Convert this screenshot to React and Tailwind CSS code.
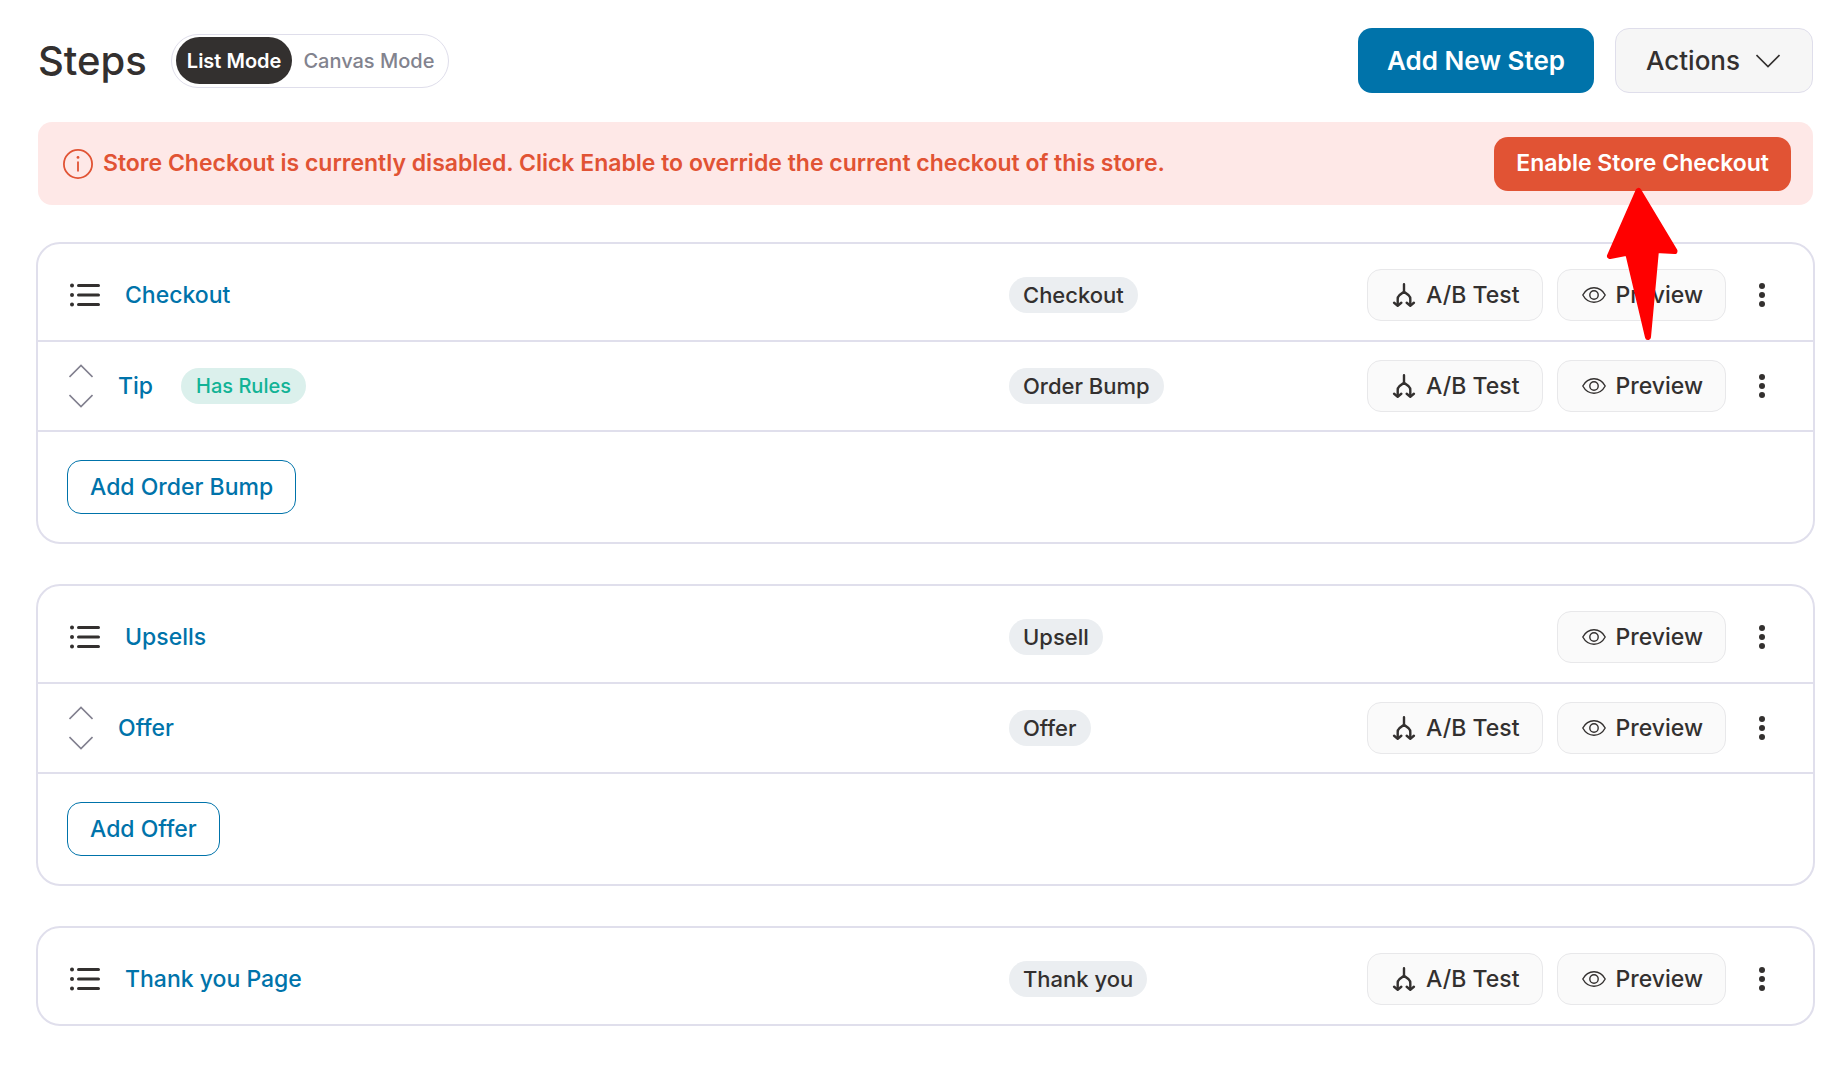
import { useState } from "react";
import clsx from "clsx";

const groups = [
  {
    id: "checkout",
    steps: [
      { name: "Checkout", type: "Checkout", abTest: true },
      { name: "Tip", type: "Order Bump", abTest: true, child: true, hasRules: true },
    ],
    addLabel: "Add Order Bump",
  },
  {
    id: "upsells",
    steps: [
      { name: "Upsells", type: "Upsell", abTest: false },
      { name: "Offer", type: "Offer", abTest: true, child: true },
    ],
    addLabel: "Add Offer",
  },
  {
    id: "thank-you",
    steps: [{ name: "Thank you Page", type: "Thank you", abTest: true }],
  },
];

function InfoIcon() {
  return (
    <svg className="size-[30px] shrink-0" viewBox="0 0 30 30" fill="none" stroke="currentColor">
      <circle cx="15" cy="15" r="14.1" strokeWidth="1.8" />
      <path d="M15 12.6V22.4" strokeWidth="1.8" />
      <circle cx="15" cy="8.4" r="1.4" fill="currentColor" stroke="none" />
    </svg>
  );
}

function ListIcon() {
  return (
    <svg className="h-6 w-[30px]" viewBox="0 0 30 24" fill="none" stroke="currentColor" strokeLinecap="round">
      <path d="M8.5 2.5H28.5M8.5 12H28.5M8.5 21.5H28.5" strokeWidth="3" />
      <path d="M2 2.5h.01M2 12h.01M2 21.5h.01" strokeWidth="4" />
    </svg>
  );
}

function Chevron({ up, className }) {
  return (
    <svg className={clsx("h-[14px] w-6", className)} viewBox="0 0 24 14" fill="none" stroke="currentColor" strokeWidth="1.6">
      <path d={up ? "M0.5 13L12 1.5L23.5 13" : "M0.5 1L12 12.5L23.5 1"} />
    </svg>
  );
}

function SplitIcon() {
  return (
    <svg className="size-6" viewBox="-0.5 0.5 24 24" fill="none" stroke="currentColor" strokeWidth="2.4" strokeLinecap="round" strokeLinejoin="round">
      <path d="M11.5 1.8V9.2M11.5 9.2L6.8 12.8Q5.2 14.2 5.2 16.4V22.4M11.5 9.2L16.2 12.8Q17.8 14.2 17.8 16.4V22.4" />
      <path d="M1.6 20.3L5.2 23.2L8.8 20.3M14.2 20.3L17.8 23.2L21.4 20.3" />
    </svg>
  );
}

function EyeIcon() {
  return (
    <svg className="h-4 w-6" viewBox="0 0 24 16" fill="none" stroke="currentColor" strokeWidth="1.4" strokeLinejoin="round">
      <path d="M0.8 8C3.4 3.2 7.4 0.8 12 0.8S20.6 3.2 23.2 8C20.6 12.8 16.6 15.2 12 15.2S3.4 12.8 0.8 8Z" />
      <circle cx="12" cy="8" r="4.2" />
    </svg>
  );
}

function DotsIcon() {
  return (
    <svg className="h-6 w-6" viewBox="0 0 24 24" fill="currentColor">
      <circle cx="12" cy="3" r="3" />
      <circle cx="12" cy="12" r="3" />
      <circle cx="12" cy="21" r="3" />
    </svg>
  );
}

function RowButton({ icon, children }) {
  return (
    <button
      type="button"
      className="flex h-[52px] items-center gap-[10px] rounded-[14px] border border-[#e8e8ea] bg-[#fafafa] pr-[22px] pl-6 text-[23px] font-medium"
    >
      {icon}
      {children}
    </button>
  );
}

function StepRow({ step }) {
  return (
    <li
      className={clsx(
        "grid grid-cols-[942fr_765fr] items-center pr-[39px] pl-[29px]",
        step.child ? "border-t-2 border-[#e0dfec] py-[18px]" : "pt-[25px] pb-[19px]"
      )}
    >
      <div className="flex items-center">
        {step.child ? (
          <div className="mr-[25px] ml-[2px] flex flex-col gap-4 text-[#82808f]">
            <button type="button" aria-label="Move up">
              <Chevron up />
            </button>
            <button type="button" aria-label="Move down">
              <Chevron />
            </button>
          </div>
        ) : (
          <span className="mr-[25px] ml-[3px]">
            <ListIcon />
          </span>
        )}
        <a href="#" className="text-[23px] font-medium text-[#0073aa]">
          {step.name}
        </a>
        {step.hasRules && (
          <span className="ml-7 flex h-9 items-center rounded-full bg-[#dbf0ec] px-[15px] text-[20px] font-medium text-[#12b396]">
            Has Rules
          </span>
        )}
      </div>

      <div className="flex items-center justify-between">
        <span className="flex h-9 items-center rounded-full bg-[#ebeef1] px-[14px] text-[22px] font-medium">
          {step.type}
        </span>
        <div className="flex items-center gap-[14px]">
          {step.abTest && <RowButton icon={<SplitIcon />}>A/B Test</RowButton>}
          <RowButton icon={<EyeIcon />}>Preview</RowButton>
          <button type="button" aria-label="More options" className="ml-[10px]">
            <DotsIcon />
          </button>
        </div>
      </div>
    </li>
  );
}

export default function App() {
  const [mode, setMode] = useState("List Mode");

  return (
    <main className="min-h-screen bg-white pt-7 pr-[29px] pb-11 pl-9 font-['Inter',sans-serif] text-[#33302f]">
      {/* Header */}
      <header className="mx-[2px] flex items-center justify-between">
        <div className="flex items-center">
          <h1 className="text-[40px] leading-[48px] font-medium">Steps</h1>
          <div className="ml-6 flex h-[54px] items-center rounded-full border border-[#dfdeeb] pr-[3px] pl-1">
            {["List Mode", "Canvas Mode"].map((label) => (
              <button
                key={label}
                type="button"
                onClick={() => setMode(label)}
                className={clsx(
                  "h-[47px] rounded-full px-[11px] text-[20px]",
                  mode === label ? "bg-[#33302f] font-semibold text-white" : "font-medium text-[#82838e]"
                )}
              >
                {label}
              </button>
            ))}
          </div>
        </div>

        <div className="flex items-center gap-[21px]">
          <button type="button" className="h-[65px] rounded-[14px] bg-[#0073aa] px-[29px] text-[26px] font-semibold text-white">
            Add New Step
          </button>
          <button
            type="button"
            className="flex h-[65px] items-center gap-4 rounded-[14px] border border-[#dfdeeb] bg-[#f6f6f6] pr-8 pl-[30px] text-[26px] font-medium"
          >
            Actions
            <Chevron />
          </button>
        </div>
      </header>

      {/* Disabled notice */}
      <section className="mx-[2px] mt-[29px] flex h-[83px] items-center gap-[10px] rounded-[14px] bg-[#fee8e7] pr-[22px] pl-[25px] text-[#e15334]">
        <InfoIcon />
        <p className="text-[23px] font-semibold">
          Store Checkout is currently disabled. Click Enable to override the current checkout of this store.
        </p>
        <div className="relative ml-auto">
          <button type="button" className="h-[54px] rounded-[14px] bg-[#e15334] px-[22px] text-[23px] font-semibold text-white">
            Enable Store Checkout
          </button>
          {/* Pointer to the enable button */}
          <svg
            className="pointer-events-none absolute top-[49px] right-[110px] z-10 h-[156px] w-[76px]"
            viewBox="0 0 76 156"
            fill="#ff0000"
            stroke="#ff0000"
            strokeWidth="6"
            strokeLinejoin="round"
          >
            <path d="M33.5 5L5 70L23 66.5L43 151L51 64L69.5 65Z" />
          </svg>
        </div>
      </section>

      {/* Step groups */}
      <div className="mt-[37px] flex flex-col gap-10">
        {groups.map((group) => (
          <section key={group.id} className="rounded-[24px] border-2 border-[#e0dfec]">
            <ul>
              {group.steps.map((step) => (
                <StepRow key={step.name} step={step} />
              ))}
            </ul>
            {group.addLabel && (
              <div className="border-t-2 border-[#e0dfec] px-[29px] pt-7 pb-7">
                <button
                  type="button"
                  className="block h-[54px] rounded-[14px] border border-[#0073aa] px-[22px] text-[23px] font-medium text-[#0073aa]"
                >
                  {group.addLabel}
                </button>
              </div>
            )}
          </section>
        ))}
      </div>
    </main>
  );
}
